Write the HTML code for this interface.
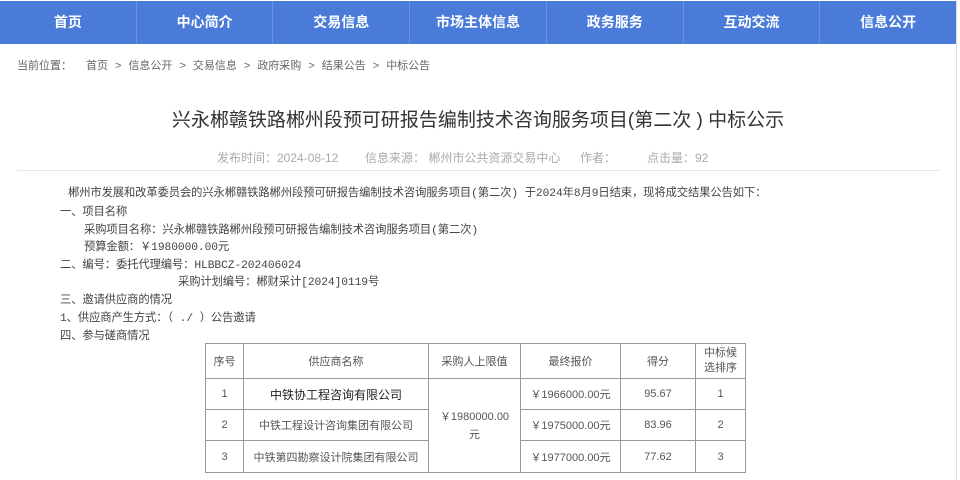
<!DOCTYPE html>
<html><head><meta charset="utf-8"><style>
*{margin:0;padding:0;box-sizing:border-box}
body{width:960px;height:480px;overflow:hidden;background:#fff;font-family:"Liberation Sans","Noto Sans CJK SC",sans-serif;position:relative}
.nav{position:absolute;left:0;top:1px;width:956px;height:43px;background:#4a7bd8;display:flex}
.nav div{flex:1;color:#fff;font-weight:bold;font-size:14px;text-align:center;line-height:42px;border-right:1px solid #6b93e0}
.nav div:last-child{border-right:none}
.rb{position:absolute;left:956px;top:0;width:1px;height:480px;background:#ddd}
.bc{position:absolute;left:17px;top:57px;font-size:11px;color:#666;word-spacing:0}
.bc span{margin:0 7px}
.title{position:absolute;left:0;width:956px;top:105px;text-align:center;font-size:19px;color:#333}
.meta{position:absolute;top:149px;font-size:12px;color:#aaa}
.hr{position:absolute;left:17px;top:170px;width:923px;height:1px;background:#e8e8e8}
.p{position:absolute;font-size:11.3px;color:#444;white-space:nowrap;font-family:"Liberation Mono","Noto Sans CJK SC",sans-serif;letter-spacing:-0.1px}
table{position:absolute;left:205px;top:343px;border-collapse:collapse;font-size:11px;color:#555}
td{border:1px solid #999;text-align:center;padding:0}
</style></head><body>
<div class="nav"><div>首页</div><div>中心简介</div><div>交易信息</div><div>市场主体信息</div><div>政务服务</div><div>互动交流</div><div>信息公开</div></div>
<div class="rb"></div>
<div class="bc">当前位置：<span></span>首页<span>&gt;</span>信息公开<span>&gt;</span>交易信息<span>&gt;</span>政府采购<span>&gt;</span>结果公告<span>&gt;</span>中标公告</div>
<div class="title">兴永郴赣铁路郴州段预可研报告编制技术咨询服务项目(第二次 ) 中标公示</div>
<div class="meta" style="left:217px">发布时间：2024-08-12</div>
<div class="meta" style="left:365px">信息来源： 郴州市公共资源交易中心</div>
<div class="meta" style="left:580px">作者：</div>
<div class="meta" style="left:647px">点击量：92</div>
<div class="hr"></div>
<div class="p" style="left:68px;top:184px">郴州市发展和改革委员会的兴永郴赣铁路郴州段预可研报告编制技术咨询服务项目(第二次) 于2024年8月9日结束，现将成交结果公告如下：</div>
<div class="p" style="left:60px;top:203px">一、项目名称</div>
<div class="p" style="left:84px;top:221px">采购项目名称：兴永郴赣铁路郴州段预可研报告编制技术咨询服务项目(第二次)</div>
<div class="p" style="left:84px;top:238px">预算金额：￥1980000.00元</div>
<div class="p" style="left:60px;top:256px">二、编号：委托代理编号：HLBBCZ-202406024</div>
<div class="p" style="left:178px;top:273px">采购计划编号：郴财采计[2024]0119号</div>
<div class="p" style="left:60px;top:291px">三、邀请供应商的情况</div>
<div class="p" style="left:60px;top:309px">1、供应商产生方式：（ ./ ）公告邀请</div>
<div class="p" style="left:60px;top:327px">四、参与磋商情况</div>
<table>
<tr style="height:35px"><td style="width:38px">序号</td><td style="width:185px">供应商名称</td><td style="width:92px">采购人上限值</td><td style="width:100px">最终报价</td><td style="width:75px">得分</td><td style="width:50px;line-height:15px">中标候<br>选排序</td></tr>
<tr style="height:31px"><td>1</td><td style="font-size:12px;color:#222">中铁协工程咨询有限公司</td><td rowspan="3" style="line-height:18px">￥1980000.00<br>元</td><td>￥1966000.00元</td><td>95.67</td><td>1</td></tr>
<tr style="height:31px"><td>2</td><td>中铁工程设计咨询集团有限公司</td><td>￥1975000.00元</td><td>83.96</td><td>2</td></tr>
<tr style="height:32px"><td>3</td><td>中铁第四勘察设计院集团有限公司</td><td>￥1977000.00元</td><td>77.62</td><td>3</td></tr>
</table>
</body></html>
